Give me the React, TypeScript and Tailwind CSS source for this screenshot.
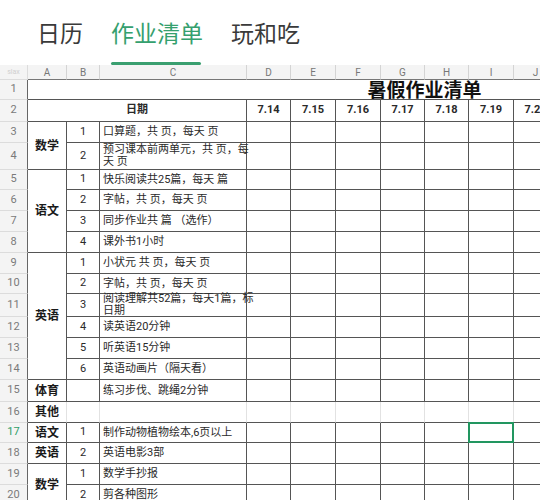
import React from "react";

const dark = "border-r border-b border-[#555]";
const letters = ["A", "B", "C", "D", "E", "F", "G", "H", "I", "J", "K", "L", "M", "N", "O", "P"];
const dates = ["7.14", "7.15", "7.16", "7.17", "7.18", "7.19", "7.20", "7.21", "7.22", "7.23", "7.24", "7.25", "7.26"];

type Row = {
  n: number;
  subject?: { text: string; span: string };
  num: string;
  task: React.ReactNode;
  blank?: boolean;
};

const rows: Row[] = [
  { n: 3, subject: { text: "数学", span: "row-span-2" }, num: "1", task: "口算题，共 页，每天 页" },
  { n: 4, num: "2", task: <>预习课本前两单元，共 页，每<br />天 页</> },
  { n: 5, subject: { text: "语文", span: "row-span-4" }, num: "1", task: "快乐阅读共25篇，每天 篇" },
  { n: 6, num: "2", task: "字帖，共 页，每天 页" },
  { n: 7, num: "3", task: "同步作业共 篇 （选作）" },
  { n: 8, num: "4", task: "课外书1小时" },
  { n: 9, subject: { text: "英语", span: "row-span-6" }, num: "1", task: "小状元 共 页，每天 页" },
  { n: 10, num: "2", task: "字帖，共 页，每天 页" },
  { n: 11, num: "3", task: <>阅读理解共52篇，每天1篇，标<br />日期</> },
  { n: 12, num: "4", task: "读英语20分钟" },
  { n: 13, num: "5", task: "听英语15分钟" },
  { n: 14, num: "6", task: "英语动画片（隔天看）" },
  { n: 15, subject: { text: "体育", span: "row-span-1" }, num: "", task: "练习步伐、跳绳2分钟" },
  { n: 16, subject: { text: "其他", span: "row-span-1" }, num: "", task: "", blank: true },
  { n: 17, subject: { text: "语文", span: "row-span-1" }, num: "1", task: "制作动物植物绘本,6页以上" },
  { n: 18, subject: { text: "英语", span: "row-span-1" }, num: "2", task: "英语电影3部" },
  { n: 19, subject: { text: "数学", span: "row-span-2" }, num: "1", task: "数学手抄报" },
  { n: 20, num: "2", task: "剪各种图形" },
];

const RowHead = ({ n, active }: { n: number; active?: boolean }) => (
  <div
    className={`flex items-center justify-center bg-[#f4f4f4] border-b border-b-[#dcdcdc] border-r border-r-[#666] text-[11px] ${
      active ? "text-[#2e9e68]" : "text-[#7a7a7a]"
    }`}
  >
    {n}
  </div>
);

export default function App() {
  return (
    <div className="w-[540px] h-[500px] overflow-hidden bg-white font-['Roboto','Noto_Sans_CJK_SC',sans-serif]">
      <div className="h-[65px] flex items-center pl-[37px] gap-[28px] text-[23px] font-['Noto_Sans_CJK_SC',sans-serif]">
        <div className="text-[#3a3a3a]">日历</div>
        <div className="relative h-full flex items-center text-[#35a06e]">
          作业清单
          <div className="absolute left-0 right-[2px] bottom-0 h-[3px] rounded-full bg-[#3a9f70]" />
        </div>
        <div className="text-[#3a3a3a]">玩和吃</div>
      </div>

      <div className="grid w-[822px] grid-cols-[28px_39px_33px_147px_44px_45px_45px_44px_44px_45px_44px_44px_44px_44px_44px_44px_44px] grid-rows-[15px_20px_22px_21px_27px_20px_21px_21px_21px_21px_20px_23px_21px_21px_21px_22px_21px_20px_21px_21px_21px] text-[#2a2a2a]">
        <div className="flex items-center justify-center bg-[#f4f4f4] border-r border-b border-[#dcdcdc] text-[7px] text-[#d0d0d0]">
          slax
        </div>
        {letters.map((l) => (
          <div
            key={l}
            className="flex items-center justify-center bg-[#f4f4f4] border-r border-r-[#d4d4d4] border-b border-b-[#777] text-[10px] text-[#777]"
          >
            {l}
          </div>
        ))}

        <RowHead n={1} />
        <div className={`col-span-16 flex items-center justify-center ${dark} text-[19px] font-bold text-[#111] font-['Noto_Sans_CJK_SC',sans-serif]`}>
          暑假作业清单
        </div>

        <RowHead n={2} />
        <div className={`col-span-3 flex items-center justify-center ${dark} text-[11px] font-bold`}>日期</div>
        {dates.map((d) => (
          <div key={d} className={`flex items-center justify-center ${dark} text-[11px] font-bold`}>
            {d}
          </div>
        ))}

        {rows.map((r) => {
          const line = r.blank ? "border-r border-r-[#e2e2e2] border-b border-b-[#555]" : dark;
          return (
            <React.Fragment key={r.n}>
              <RowHead n={r.n} active={r.n === 17} />
              {r.subject && (
                <div
                  className={`${r.subject.span} flex items-center justify-center text-[12px] font-bold text-[#1a1a1a] border-b border-b-[#555] border-r ${
                    r.blank ? "border-r-[#e2e2e2]" : "border-r-[#555]"
                  }`}
                >
                  {r.subject.text}
                </div>
              )}
              <div className={`flex items-center justify-center text-[11px] ${line}`}>{r.num}</div>
              <div className={`flex items-center pl-[3px] whitespace-nowrap text-[11px] leading-[12px] ${line}`}>
                {r.task}
              </div>
              {dates.map((d, i) => (
                <div key={d} className={`relative ${line}`}>
                  {r.n === 17 && i === 5 && (
                    <div className="absolute -left-px -top-px right-[-1px] bottom-[-1px] border-2 border-[#229660]" />
                  )}
                </div>
              ))}
            </React.Fragment>
          );
        })}
      </div>
    </div>
  );
}
